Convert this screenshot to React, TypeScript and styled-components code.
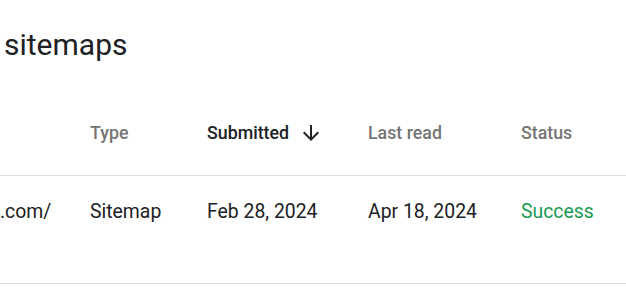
import React from "react";
import styled, { createGlobalStyle } from "styled-components";

const Global = createGlobalStyle`
  html, body { margin: 0; padding: 0; background: #ffffff; }
  body { font-family: Roboto, "Noto Sans", Arial, sans-serif; }
`;

const Page = styled.div`
  width: 626px;
  height: 301px;
  overflow: hidden;
  background: #fff;
`;

const Title = styled.h1`
  margin: 0;
  padding: 27px 0 0 4px;
  height: 56px;
  box-sizing: border-box;
  font-size: 30px;
  line-height: 36px;
  font-weight: 400;
  color: #202124;
`;

const Row = styled.div<{ $head?: boolean }>`
  display: grid;
  grid-template-columns: 90px 117px 161px 153px 1fr;
  align-items: center;
  border-bottom: 1px solid #e0e0e0;
  box-sizing: border-box;
  padding: ${(p) => (p.$head ? "65px 0 30px" : "24px 0 59px")};
`;

const HeadCell = styled.div<{ $active?: boolean }>`
  display: flex;
  align-items: center;
  gap: 10px;
  font-size: 17.8px;
  line-height: 24px;
  font-weight: 500;
  color: ${(p) => (p.$active ? "#202124" : "#757575")};
  white-space: nowrap;
`;

const Cell = styled.div<{ $status?: boolean }>`
  font-size: 19.4px;
  line-height: 24px;
  color: ${(p) => (p.$status ? "#1a9a55" : "#202124")};
  white-space: nowrap;
`;

const ArrowIcon = () => (
  <svg width="24" height="24" viewBox="0 0 24 24" aria-hidden="true">
    <path
      fill="#202124"
      d="M20 12l-1.41-1.41L13 16.17V4h-2v12.17l-5.58-5.59L4 12l8 8 8-8z"
    />
  </svg>
);

export default function App() {
  return (
    <Page>
      <Global />
      <Title>sitemaps</Title>
      <Row $head>
        <HeadCell />
        <HeadCell>Type</HeadCell>
        <HeadCell $active>
          Submitted
          <ArrowIcon />
        </HeadCell>
        <HeadCell>Last read</HeadCell>
        <HeadCell>Status</HeadCell>
      </Row>
      <Row>
        <Cell>.com/</Cell>
        <Cell>Sitemap</Cell>
        <Cell>Feb 28, 2024</Cell>
        <Cell>Apr 18, 2024</Cell>
        <Cell $status>Success</Cell>
      </Row>
    </Page>
  );
}
